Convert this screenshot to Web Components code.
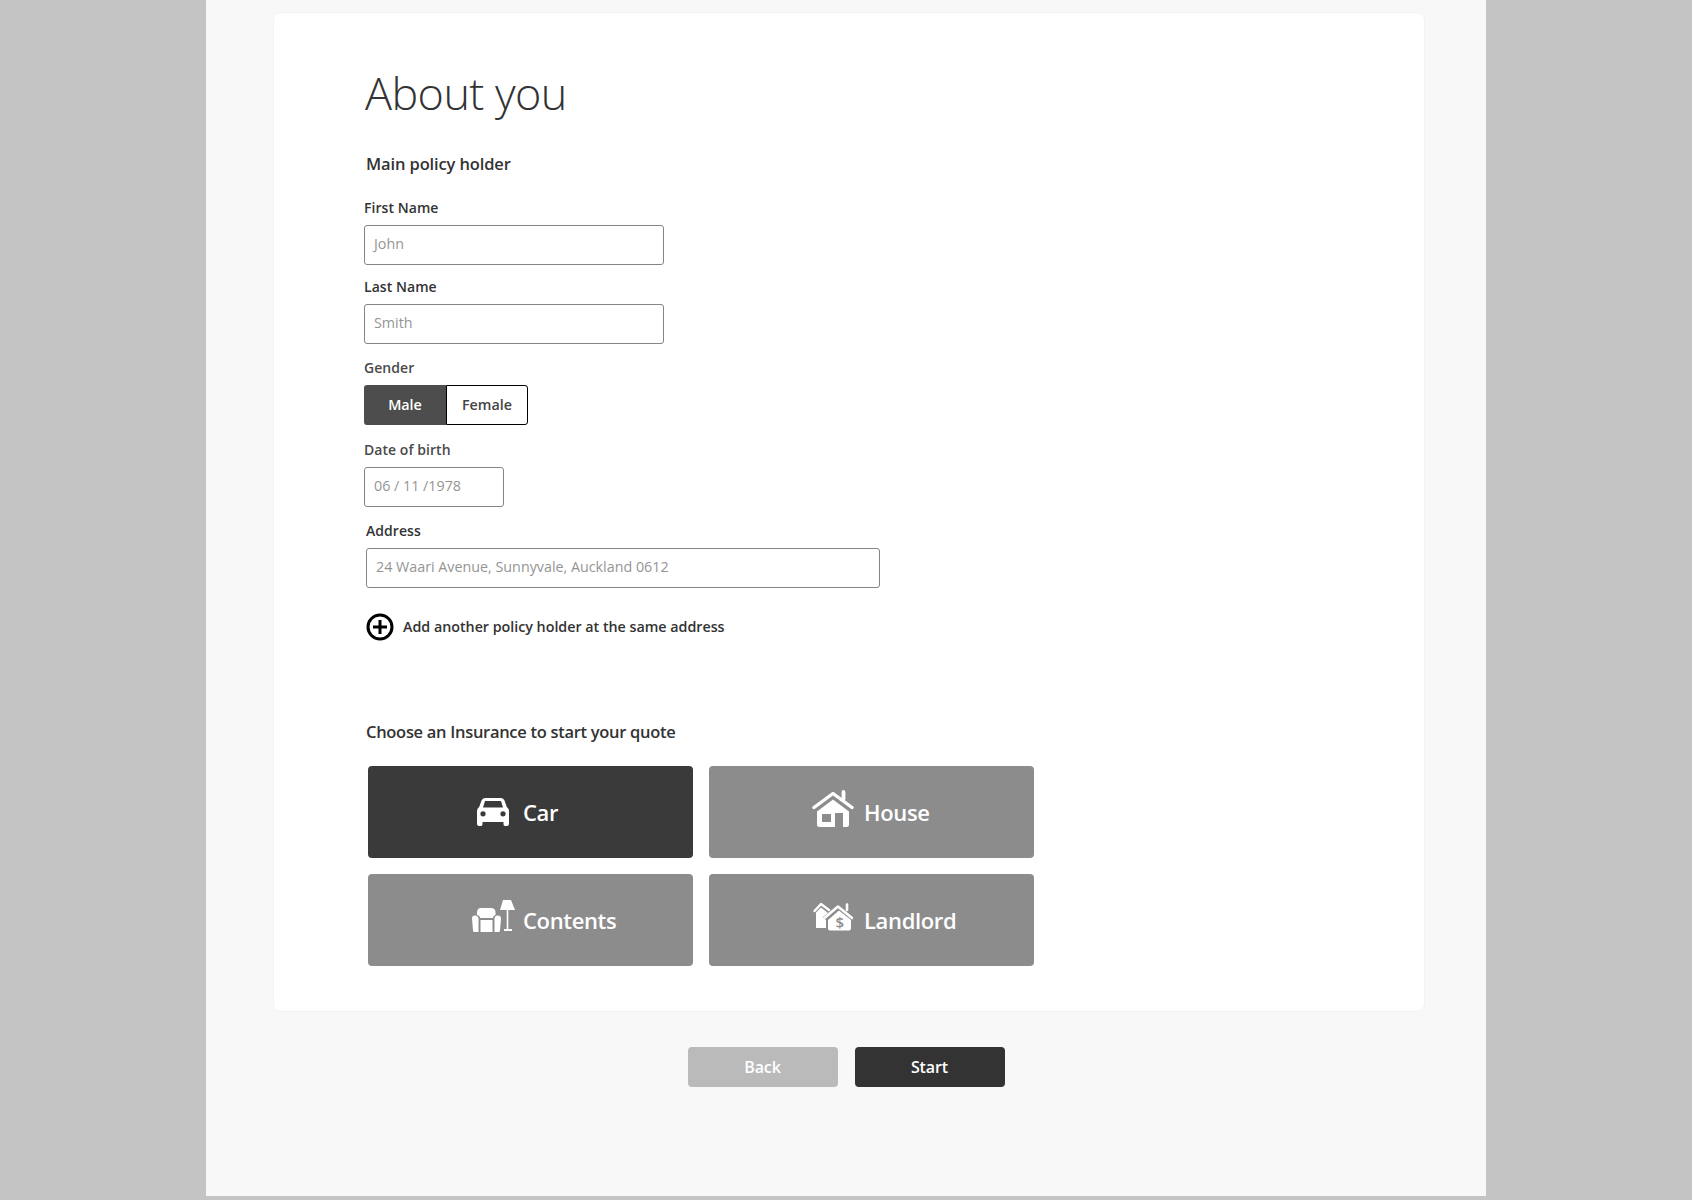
<!DOCTYPE html>
<html>
<head>
<meta charset="utf-8">
<title>About you</title>
<style>
    html, body { margin: 0; height: 1200px; overflow: hidden; background: #c4c4c4; }
    body { font-family: "Open Sans", "Liberation Sans", sans-serif; }
</style>
</head>
<body>
<quote-page>
    <quote-card>
        <page-title>About you</page-title>
        <section-title style="letter-spacing:-0.13px">Main policy holder</section-title>
        <form-field label="First Name" value="John" width="300" style="margin-top:10px"></form-field>
        <form-field label="Last Name" value="Smith" width="300"></form-field>
        <form-field label="Gender" tone="soft" style="margin-top:2px">
            <gender-toggle></gender-toggle>
        </form-field>
        <form-field label="Date of birth" tone="soft" value="06 / 11 /1978" width="140" style="margin-top:3px"></form-field>
        <form-field label="Address" value="24 Waari Avenue, Sunnyvale, Auckland 0612" width="514" style="margin:2px 0 0 2px"></form-field>
        <add-holder>Add another policy holder at the same address</add-holder>
        <section-title style="margin-top:79px;letter-spacing:-0.3px">Choose an Insurance to start your quote</section-title>
        <insurance-grid>
            <insurance-button selected>
                <svg slot="icon" width="32" height="28" viewBox="0 0 32 28" style="margin-left:2px">
                    <path fill="#fff" fill-rule="evenodd" d="M8 0H24Q26.500 0 27.500 2.500L29.800 9Q32 10.500 32 13V26Q32 28 30 28H28Q26.500 28 26.500 26V24H5.500V26Q5.500 28 4 28H2Q0 28 0 26V13Q0 10.500 2.200 9L4.500 2.500Q5.500 0 8 0ZM8 3L6 9.500H26L24 3ZM6 13.200A2.600 2.600 0 1 0 6 18.400A2.600 2.600 0 1 0 6 13.200ZM26 13.200A2.600 2.600 0 1 0 26 18.400A2.600 2.600 0 1 0 26 13.200Z"/>
                </svg>
                Car
            </insurance-button>
            <insurance-button>
                <svg slot="icon" width="42" height="37" viewBox="0 0 42 37" style="margin-bottom:7px">
                    <path fill="none" stroke="#fff" stroke-width="3.400" stroke-linecap="round" stroke-linejoin="round" d="M2 17.500L21 3.500L40 17.500"/>
                    <path fill="none" stroke="#fff" stroke-width="3.800" stroke-linecap="round" d="M31.500 2V9"/>
                    <path fill="#fff" fill-rule="evenodd" d="M21 9.500L37 21.500V34.500Q37 37 34.500 37H31V23H23V37H7.500Q5 37 5 34.500V21.500ZM10 24V32H19V24Z"/>
                </svg>
                House
            </insurance-button>
            <insurance-button>
                <svg slot="icon" width="43" height="33" viewBox="0 0 43 33" style="margin:0 0 7px 2px">
                    <path fill="#fff" d="M31 0H39L43 10H28Z"/>
                    <path fill="#fff" d="M34.700 10H36.300V29H40V31H32V29H34.700Z"/>
                    <path fill="#fff" d="M9 8H19Q23.500 8 23.500 12.500V15Q21 15.500 21 18H8Q8 15.500 5 15V12.500Q5 8 9 8Z"/>
                    <path fill="#fff" d="M2.800 15.500Q6.500 15.500 6.500 19V32H2.500Q1 32 1 30.500L0 18.500Q0 15.500 2.800 15.500ZM25.700 15.500Q29 15.500 29 18.500L28 30.500Q28 32 26.500 32H22.500V19Q22.500 15.500 25.700 15.500Z"/>
                    <path fill="#fff" d="M8.500 20H20.500V32H8.500Z"/>
                </svg>
                Contents
            </insurance-button>
            <insurance-button>
                <svg slot="icon" width="40" height="29" viewBox="0 0 40 29" style="margin-bottom:7px">
                    <path fill="none" stroke="#fff" stroke-width="2.400" stroke-linecap="round" stroke-linejoin="round" d="M1.500 9L8 2L16 8"/>
                    <path fill="#fff" d="M8 5.500L15 11L10 15L13 18V26H3V10.500Z"/>
                    <path fill="none" stroke="#fff" stroke-width="2.600" stroke-linecap="round" stroke-linejoin="round" d="M12 15.500L25 4.500L39 16"/>
                    <path fill="none" stroke="#fff" stroke-width="2.600" stroke-linecap="round" d="M34 2.500V8"/>
                    <path fill="#fff" d="M26 8.500L38 18V26.500Q38 28.500 36 28.500H17Q15 28.500 15 26.500V18Z"/>
                    <text x="26.500" y="26" text-anchor="middle" font-family="'Open Sans', sans-serif" font-size="15" font-weight="600" fill="#8c8c8c">$</text>
                </svg>
                Landlord
            </insurance-button>
        </insurance-grid>
    </quote-card>
    <quote-actions>
        <action-button kind="back">Back</action-button>
        <action-button>Start</action-button>
    </quote-actions>
</quote-page>

<script>
class QuotePage extends HTMLElement {
    constructor() {
        super();
        this.attachShadow({ mode: 'open' });
        this.shadowRoot.innerHTML = `<style>
            :host{
                display:block;
                box-sizing:border-box;
                width:1280px;
                height:1196px;
                margin:0 auto;
                padding:12px 61px 0 67px;
                background:#f8f8f8;
                color:#333;
            }
        </style><slot></slot>`;
    }
}

class QuoteCard extends HTMLElement {
    constructor() {
        super();
        this.attachShadow({ mode: 'open' });
        this.shadowRoot.innerHTML = `<style>
            :host{
                display:block;
                box-sizing:border-box;
                padding:50px 90px 45px;
                background:#fff;
                border:1px solid #f3f3f3;
                border-radius:8px;
            }
        </style><slot></slot>`;
    }
}

class PageTitle extends HTMLElement {
    constructor() {
        super();
        this.attachShadow({ mode: 'open' });
        this.shadowRoot.innerHTML = `<style>
            :host{
                display:block;
                height:60px;
                margin-left:1px;
                font-size:45px;
                line-height:60px;
                font-weight:300;
                letter-spacing:-0.6px;
                color:#333;
            }
        </style><slot></slot>`;
    }
}

class SectionTitle extends HTMLElement {
    constructor() {
        super();
        this.attachShadow({ mode: 'open' });
        this.shadowRoot.innerHTML = `<style>
            :host{
                display:block;
                margin:29px 0 0 2px;
                font-size:16.5px;
                line-height:24px;
                font-weight:600;
                color:#333;
            }
        </style><slot></slot>`;
    }
}

class FormField extends HTMLElement {
    constructor() {
        super();
        this.attachShadow({ mode: 'open' });
    }

    connectedCallback() {
        const label = this.getAttribute('label');
        const value = this.getAttribute('value');
        const width = this.getAttribute('width');
        const color = this.getAttribute('tone') === 'soft' ? '#4a4a4a' : '#333';
        const box = value ? `<div class="box" style="width:${width}px"><span>${value}</span></div>` : '<slot></slot>';
        this.shadowRoot.innerHTML = `<style>
            :host{ display:block; }
            .label{
                box-sizing:border-box;
                height:39px;
                padding-top:13px;
                font-size:14px;
                line-height:18px;
                font-weight:600;
                letter-spacing:0.05px;
                color:${color};
            }
            .box{
                box-sizing:border-box;
                height:40px;
                padding:0 9px;
                display:flex;
                align-items:center;
                background:#fff;
                border:1px solid #858585;
                border-radius:3px;
                font-size:14.3px;
                color:#959595;
            }
            .box span{ position:relative; top:-2px; }
        </style><div class="label">${label}</div>${box}`;
    }
}

class GenderToggle extends HTMLElement {
    constructor() {
        super();
        this.attachShadow({ mode: 'open' });
        this.shadowRoot.innerHTML = `<style>
            :host{
                display:flex;
                width:164px;
                height:40px;
                font-size:14.3px;
                font-weight:600;
            }
            div{
                box-sizing:border-box;
                width:82px;
                display:flex;
                align-items:center;
                justify-content:center;
                padding-bottom:2px;
            }
            .male{
                background:#4d4d4d;
                color:#fff;
                border-radius:3px 0 0 3px;
            }
            .female{
                background:#fff;
                color:#444;
                border:1px solid #000;
                border-radius:0 3px 3px 0;
            }
        </style><div class="male"><span>Male</span></div><div class="female"><span>Female</span></div>`;
    }
}

class AddHolder extends HTMLElement {
    constructor() {
        super();
        this.attachShadow({ mode: 'open' });
        this.shadowRoot.innerHTML = `<style>
            :host{
                display:flex;
                align-items:center;
                gap:9px;
                height:28px;
                margin:25px 0 0 2px;
                font-size:14.3px;
                font-weight:600;
                letter-spacing:-0.02px;
                color:#333;
            }
            svg{ flex:none; }
            span{ position:relative; top:-1px; }
        </style>
        <svg width="28" height="28" viewBox="0 0 28 28" fill="none" stroke="#000" stroke-width="3">
            <circle cx="14" cy="14" r="12"/>
            <path d="M14 7V21M7 14H21"/>
        </svg>
        <span><slot></slot></span>`;
    }
}

class InsuranceGrid extends HTMLElement {
    constructor() {
        super();
        this.attachShadow({ mode: 'open' });
        this.shadowRoot.innerHTML = `<style>
            :host{
                display:grid;
                grid-template-columns:325px 325px;
                grid-auto-rows:92px;
                gap:16px;
                margin:22px 0 0 4px;
            }
        </style><slot></slot>`;
    }
}

class InsuranceButton extends HTMLElement {
    constructor() {
        super();
        this.attachShadow({ mode: 'open' });
        this.shadowRoot.innerHTML = `<style>
            :host{
                display:flex;
                align-items:center;
                padding-left:104px;
                background:#8c8c8c;
                border-radius:4px;
                font-size:22px;
                font-weight:600;
                letter-spacing:-0.35px;
                color:#fff;
            }
            :host([selected]){ background:#3a3a3a; }
            .icon{
                flex:none;
                width:40px;
                margin-right:11px;
                display:flex;
                justify-content:center;
            }
            ::slotted(svg){ flex:none; }
        </style><div class="icon"><slot name="icon"></slot></div><slot></slot>`;
    }
}

class QuoteActions extends HTMLElement {
    constructor() {
        super();
        this.attachShadow({ mode: 'open' });
        this.shadowRoot.innerHTML = `<style>
            :host{
                display:flex;
                justify-content:center;
                gap:17px;
                margin:35px 6px 0 0;
            }
        </style><slot></slot>`;
    }
}

class ActionButton extends HTMLElement {
    constructor() {
        super();
        this.attachShadow({ mode: 'open' });
        this.shadowRoot.innerHTML = `<style>
            :host{
                display:flex;
                align-items:center;
                justify-content:center;
                width:150px;
                height:40px;
                background:#333;
                border-radius:4px;
                font-size:16px;
                font-weight:600;
                letter-spacing:-0.1px;
                color:#fff;
            }
            :host([kind="back"]){ background:#bababa; }
        </style><slot></slot>`;
    }
}

customElements.define('quote-page', QuotePage);
customElements.define('quote-card', QuoteCard);
customElements.define('page-title', PageTitle);
customElements.define('section-title', SectionTitle);
customElements.define('form-field', FormField);
customElements.define('gender-toggle', GenderToggle);
customElements.define('add-holder', AddHolder);
customElements.define('insurance-grid', InsuranceGrid);
customElements.define('insurance-button', InsuranceButton);
customElements.define('quote-actions', QuoteActions);
customElements.define('action-button', ActionButton);
</script>
</body>
</html>
